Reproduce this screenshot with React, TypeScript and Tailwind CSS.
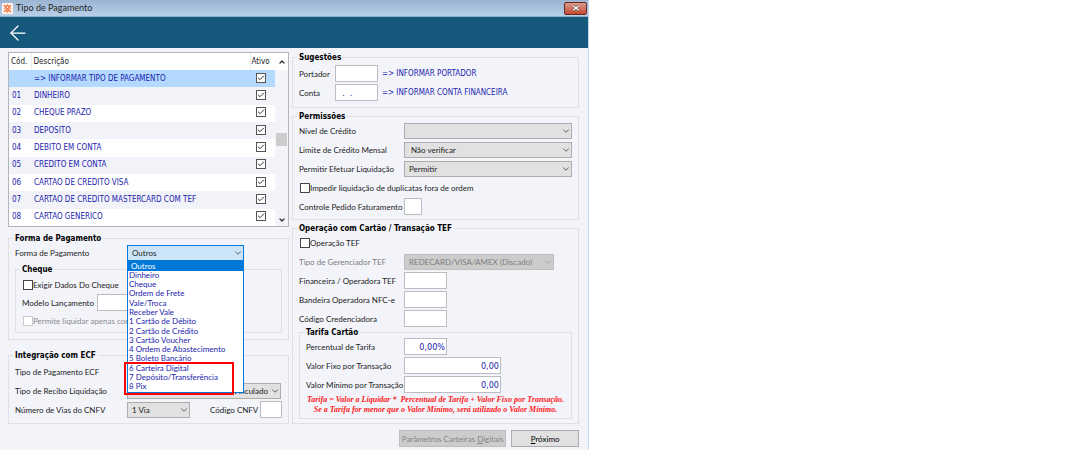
import React from "react";
import { ArrowLeft, Check, ChevronDown, ChevronUp } from "lucide-react";

const tipos = [
  { cod: "", descricao: "=> INFORMAR TIPO DE PAGAMENTO" },
  { cod: "01", descricao: "DINHEIRO" },
  { cod: "02", descricao: "CHEQUE PRAZO" },
  { cod: "03", descricao: "DEPOSITO" },
  { cod: "04", descricao: "DEBITO EM CONTA" },
  { cod: "05", descricao: "CREDITO EM CONTA" },
  { cod: "06", descricao: "CARTAO DE CREDITO VISA" },
  { cod: "07", descricao: "CARTAO DE CREDITO MASTERCARD COM TEF" },
  { cod: "08", descricao: "CARTAO GENERICO" },
];

const formas = [
  "Outros",
  "Dinheiro",
  "Cheque",
  "Ordem de Frete",
  "Vale/Troca",
  "Receber Vale",
  "1 Cartão de Débito",
  "2 Cartão de Crédito",
  "3 Cartão Voucher",
  "4 Ordem de Abastecimento",
  "5 Boleto Bancário",
  "6 Carteira Digital",
  "7 Depósito/Transferência",
  "8 Pix",
];

const condensed = "font-['DejaVu_Sans_Condensed','DejaVu_Sans',sans-serif]";

function Group({
  title,
  className = "",
  children,
}: {
  title: string;
  className?: string;
  children: React.ReactNode;
}) {
  return (
    <fieldset className={`min-w-0 border border-[#dfe0e4] px-1.5 ${className}`}>
      <legend
        className={`-ml-0.5 h-3 px-0.5 text-[8px] leading-[14px] font-bold text-black ${condensed}`}
      >
        {title}
      </legend>
      {children}
    </fieldset>
  );
}

function Row({
  id,
  label,
  labelWidth = "w-[105px]",
  muted = false,
  children,
}: {
  id: string;
  label: string;
  labelWidth?: string;
  muted?: boolean;
  children: React.ReactNode;
}) {
  return (
    <div className="flex h-[17px] items-center">
      <label
        htmlFor={id}
        className={`shrink-0 whitespace-nowrap ${labelWidth} ${muted ? "text-[#7d7d80]" : ""}`}
      >
        {label}
      </label>
      {children}
    </div>
  );
}

function Field({
  id,
  width = "w-[43px]",
  value = "",
  align = "text-right",
}: {
  id: string;
  width?: string;
  value?: string;
  align?: string;
}) {
  return (
    <input
      id={id}
      type="text"
      defaultValue={value}
      className={`h-[17px] border border-[#bcbdc2] bg-white px-px text-[9px] text-[#1c1cae] outline-none ${condensed} ${width} ${align}`}
    />
  );
}

function Combo({
  id,
  width,
  options,
  tone = "border-[#adadad] bg-[#e1e1e1]",
  disabled = false,
}: {
  id: string;
  width: string;
  options: string[];
  tone?: string;
  disabled?: boolean;
}) {
  return (
    <div className={`relative h-4 ${width}`}>
      <select
        id={id}
        disabled={disabled}
        className={`block h-4 w-full appearance-none border pr-3 pl-1 leading-[14px] outline-none disabled:opacity-100 ${tone}`}
      >
        {options.map((o) => (
          <option key={o}>{o}</option>
        ))}
      </select>
      <ChevronDown
        className={`pointer-events-none absolute top-[3px] right-px size-2.5 ${disabled ? "text-[#9a9a9a]" : "text-[#444]"}`}
      />
    </div>
  );
}

function Option({
  label,
  disabled = false,
}: {
  label: string;
  disabled?: boolean;
}) {
  return (
    <label
      className={`flex h-[17px] items-center whitespace-nowrap ${disabled ? "text-[#8a8a8d]" : ""}`}
    >
      <input
        type="checkbox"
        disabled={disabled}
        className={`ml-px size-2.5 appearance-none border bg-white ${disabled ? "border-[#cccccc]" : "border-[#444]"}`}
      />
      {label}
    </label>
  );
}

function TiposGrid() {
  return (
    <div className={`flex h-[175px] border border-[#b4b5ba] bg-white ${condensed}`}>
      <table className="h-full flex-1 border-collapse text-left">
        <thead>
          <tr className="h-[17px]">
            <th className="w-[22px] border-r border-[#ececec] pl-0.5 font-normal">Cód.</th>
            <th className="border-r border-[#ececec] pl-0.5 font-normal">Descrição</th>
            <th className="w-[25px] pl-px font-normal">Ativo</th>
          </tr>
        </thead>
        <tbody className="text-[#1c1cae]">
          {tipos.map((t, i) => (
            <tr
              key={t.descricao}
              className={i === 0 ? "bg-[#b3d9ff]" : i % 2 ? "bg-[#f2f3f9]" : "bg-white"}
            >
              <td className="p-0 pl-[3px]">{t.cod}</td>
              <td className="p-0 pl-[3px] whitespace-nowrap">{t.descricao}</td>
              <td className="p-0 pb-0.5 pl-1.5">
                <span className="relative block size-2.5">
                  <input
                    type="checkbox"
                    defaultChecked
                    aria-label={`Ativo ${t.descricao}`}
                    className="block size-2.5 appearance-none border border-[#555] bg-white"
                  />
                  <Check
                    className="pointer-events-none absolute top-px left-px size-2 text-[#333]"
                    strokeWidth={3}
                  />
                </span>
              </td>
            </tr>
          ))}
        </tbody>
      </table>
      <div className="flex w-[13px] flex-col items-center justify-between bg-[#f3f4f9] text-[#333]">
        <div className="flex h-[17px] w-full items-center justify-center bg-white">
          <ChevronUp className="size-2" strokeWidth={4} />
        </div>
        <div className="mb-2 h-[13px] w-[11px] bg-[#cdcdcd]" />
        <ChevronDown className="mb-0.5 size-2" strokeWidth={4} />
      </div>
    </div>
  );
}

function FormasList() {
  return (
    <div className="absolute top-4 left-0 z-10 w-[117px] border border-[#0078d7] bg-white">
      <ul role="listbox" aria-label="Forma de Pagamento" className="flex h-[130px] flex-col text-[#1c1cae]">
        {formas.map((f, i) => (
          <li
            key={f}
            role="option"
            aria-selected={i === 0}
            className={`flex min-h-0 flex-1 items-center leading-[9px] whitespace-nowrap ${i === 0 ? "bg-[#0078d7] pl-[3px] text-white" : "pl-px"}`}
          >
            {f}
          </li>
        ))}
      </ul>
      {/* Destaque das novas formas */}
      <div className="absolute -bottom-[3px] -left-1 h-[33px] w-[110px] border-2 border-[#f00]" />
    </div>
  );
}

export default function App() {
  return (
    <div className="min-h-screen bg-white">
      <main className="w-6/11 min-w-[589px] border-r border-[#c3d5ea] bg-[#f3f4fa] pb-[3px] text-[8px] leading-[10px] text-[#222] font-['Lato','Open_Sans',sans-serif]">
        <header className="flex h-[17px] items-center border-b border-[#8aa9c8] bg-linear-to-b from-[#9ab4d2] to-[#b9d0e8] pl-0.5">
          <svg viewBox="0 0 11 11" className="size-[11px]" aria-hidden="true">
            <rect width="11" height="11" rx="1" fill="#fff3ea" />
            <path
              d="M2 2l2 2 1.500-2L7 4l2-2M2 5.500l2-1 1.500 2L7 4.500l2 1M2 9l2-2 1.500 2L7 7l2 2"
              fill="none"
              stroke="#f0703a"
              strokeWidth="1.200"
            />
          </svg>
          <h1 className="ml-[3px] flex-1 text-[9px] text-[#222]">Tipo de Pagamento</h1>
          <button
            type="button"
            aria-label="Fechar"
            className="mr-px flex h-[13px] w-[23px] items-center justify-center rounded-xs border border-[#6b2a24] bg-linear-to-b from-[#dc9a8c] to-[#c04a32]"
          >
            <svg viewBox="0 0 8 6" className="h-1.5 w-2">
              <path d="M1.500 1l5 4M6.500 1l-5 4" stroke="#555" strokeWidth="2.600" />
              <path d="M1.500 1l5 4M6.500 1l-5 4" stroke="#fff" strokeWidth="1.600" />
            </svg>
          </button>
        </header>
        <nav className="flex h-[31px] items-center bg-[#14597c] pl-1.5">
          <button type="button" aria-label="Voltar" className="text-white">
            <ArrowLeft className="size-6" strokeWidth={1.25} />
          </button>
        </nav>

        <div className="flex gap-[3px] pr-[9px] pl-2">
          <div className="w-[281px] shrink-0 pt-1">
            <TiposGrid />

            <Group title="Forma de Pagamento" className="mt-[5px] pb-1.5">
              <Row id="forma" label="Forma de Pagamento" labelWidth="w-[112px]">
                <div className="relative">
                  <Combo
                    id="forma"
                    width="w-[117px]"
                    options={formas}
                    tone="border-[#0078d7] bg-[#cce4f7]"
                  />
                  <FormasList />
                </div>
              </Row>
              <Group title="Cheque" className="mt-0.5 pb-[3px]">
                <div className="flex flex-col gap-px pt-px">
                  <Option label="Exigir Dados Do Cheque" />
                  <Row id="modelo" label="Modelo Lançamento" labelWidth="w-[75px]">
                    <Field id="modelo" width="w-[43px]" />
                  </Row>
                  <Option label="Permite liquidar apenas com" disabled />
                </div>
              </Group>
            </Group>

            <Group title="Integração com ECF" className="mt-[9px] pb-[5px]">
              <div className="flex flex-col gap-0.5 pt-0.5">
                <Row id="ecf" label="Tipo de Pagamento ECF" labelWidth="w-[112px]">
                  <Combo id="ecf" width="w-[117px]" options={["Dinheiro"]} />
                </Row>
                <Row id="recibo" label="Tipo de Recibo Liquidação" labelWidth="w-[112px]">
                  <Combo
                    id="recibo"
                    width="w-[154px]"
                    options={["Comprovante Não Fiscal Vinculado"]}
                    tone="border-[#adadad] bg-[#e1e1e1] text-right"
                  />
                </Row>
                <div className="flex items-center">
                  <Row id="vias" label="Número de Vias do CNFV" labelWidth="w-[112px]">
                    <Combo id="vias" width="w-[63px]" options={["1 Via", "2 Vias"]} />
                  </Row>
                  <div className="ml-5">
                    <Row id="cnfv" label="Código CNFV" labelWidth="w-[50px]">
                      <Field id="cnfv" width="w-[22px]" />
                    </Row>
                  </div>
                </div>
              </div>
            </Group>
          </div>

          <div className="flex min-w-0 flex-1 flex-col gap-0.5 pt-[3px]">
            <Group title="Sugestões" className="pb-1.5">
              <div className="flex flex-col gap-0.5 pt-0.5">
                <Row id="portador" label="Portador" labelWidth="w-9">
                  <Field id="portador" />
                  <span className={`ml-1 text-[#1c1cae] ${condensed}`}>
                    =&gt; INFORMAR PORTADOR
                  </span>
                </Row>
                <Row id="conta" label="Conta" labelWidth="w-9">
                  <Field id="conta" value="  .  ." align="text-left" />
                  <span className={`ml-1 text-[#1c1cae] ${condensed}`}>
                    =&gt; INFORMAR CONTA FINANCEIRA
                  </span>
                </Row>
              </div>
            </Group>

            <Group title="Permissões" className="pb-1">
              <div className="flex flex-col gap-0.5">
                <Row id="nivel" label="Nível de Crédito">
                  <Combo id="nivel" width="w-[169px]" options={[""]} />
                </Row>
                <Row id="limite" label="Limite de Crédito Mensal">
                  <Combo id="limite" width="w-[169px]" options={["\u00a0Não verificar"]} />
                </Row>
                <Row id="efetuar" label="Permitir Efetuar Liquidação">
                  <Combo id="efetuar" width="w-[169px]" options={["Permitir"]} />
                </Row>
                <Option label="Impedir liquidação de duplicatas fora de ordem" />
                <Row id="controle" label="Controle Pedido Faturamento">
                  <Field id="controle" width="w-[18px]" />
                </Row>
              </div>
            </Group>

            <Group title="Operação com Cartão / Transação TEF" className="pb-1">
              <div className="flex flex-col gap-0.5">
                <Option label="Operação TEF" />
                <Row id="gerenciador" label="Tipo de Gerenciador TEF" muted>
                  <Combo
                    id="gerenciador"
                    width="w-[150px]"
                    options={["REDECARD/VISA/AMEX (Discado)"]}
                    tone="border-[#bfbfbf] bg-[#cccccc] text-[#7d7d80]"
                    disabled
                  />
                </Row>
                <Row id="financeira" label="Financeira / Operadora TEF">
                  <Field id="financeira" />
                </Row>
                <Row id="bandeira" label="Bandeira Operadora NFC-e">
                  <Field id="bandeira" />
                </Row>
                <Row id="credenciadora" label="Código Credenciadora">
                  <Field id="credenciadora" />
                </Row>
              </div>
              <Group title="Tarifa Cartão" className="-mt-px pb-[3px]">
                <div className="flex flex-col gap-0.5">
                  <Row id="percentual" label="Percentual de Tarifa" labelWidth="w-[98px]">
                    <Field id="percentual" value="0,00%" />
                  </Row>
                  <Row id="fixo" label="Valor Fixo por Transação" labelWidth="w-[98px]">
                    <Field id="fixo" width="w-[97px]" value="0,00" />
                  </Row>
                  <Row id="minimo" label="Valor Mínimo por Transação" labelWidth="w-[98px]">
                    <Field id="minimo" width="w-[97px]" value="0,00" />
                  </Row>
                  <p className="text-center text-[8px] leading-[10px] font-bold whitespace-pre text-[#ff1a1a] italic font-['Liberation_Serif',serif]">
                    {"Tarifa = Valor a Liquidar *  Percentual de Tarifa + Valor Fixo por Transação.\nSe a Tarifa for menor que o Valor Mínimo, será utilizado o Valor Mínimo."}
                  </p>
                </div>
              </Group>
            </Group>

            <div className="mt-1 flex justify-end gap-[5px]">
              <button
                type="button"
                disabled
                className="h-[17px] w-[107px] border border-[#bfbfbf] bg-[#cccccc] whitespace-nowrap text-[#838383]"
              >
                Parâmetros Carteiras <u>D</u>igitais
              </button>
              <button
                type="button"
                className="h-[17px] w-[68px] border border-[#adadad] bg-[#e1e1e1] text-black"
              >
                <u>P</u>róximo
              </button>
            </div>
          </div>
        </div>
      </main>
    </div>
  );
}
